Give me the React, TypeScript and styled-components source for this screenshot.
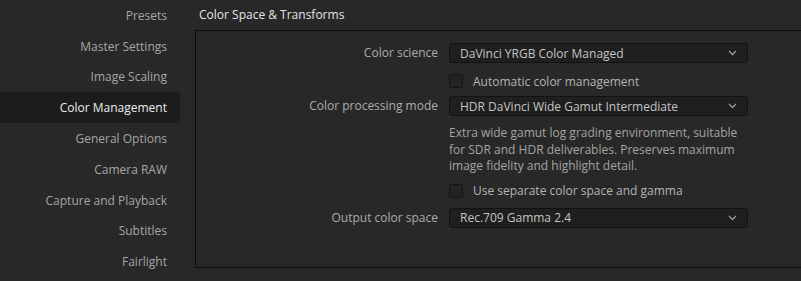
import React from 'react';
import styled, { createGlobalStyle } from 'styled-components';

const GlobalStyle = createGlobalStyle`
    html, body {
        margin: 0;
        padding: 0;
        background: #282828;
        overflow: hidden;
    }
    body {
        font-family: 'Open Sans', 'Liberation Sans', sans-serif;
        -webkit-font-smoothing: antialiased;
    }
`;

const menuItems = [
    'Presets',
    'Master Settings',
    'Image Scaling',
    'Color Management',
    'General Options',
    'Camera RAW',
    'Capture and Playback',
    'Subtitles',
    'Fairlight',
];

const Chevron = () => (
    <svg width="9" height="6" viewBox="0 0 9 6">
        <path d="M1 1 L4.5 4.5 L8 1" fill="none" stroke="#9a9a9a" strokeWidth="1.3" />
    </svg>
);

const Dropdown = ({ value }: { value: string }) => (
    <Select>
        <span>{value}</span>
        <Chevron />
    </Select>
);

const CheckRow = ({ label, top }: { label: string; top: number }) => (
    <>
        <span />
        <Check $top={top}>
            <Box />
            <span>{label}</span>
        </Check>
    </>
);

const App = () => {
    return (
        <Page>
            <GlobalStyle />
            <Sidebar>
                {menuItems.map((item) => (
                    <MenuItem key={item} $active={item === 'Color Management'}>
                        {item}
                    </MenuItem>
                ))}
            </Sidebar>
            <Main>
                <Title>Color Space &amp; Transforms</Title>
                <Panel>
                    <Form>
                        <Label $top={12}>Color science</Label>
                        <Cell $top={12}>
                            <Dropdown value="DaVinci YRGB Color Managed" />
                        </Cell>

                        <CheckRow label="Automatic color management" top={11} />

                        <Label $top={8}>Color processing mode</Label>
                        <Cell $top={8}>
                            <Dropdown value="HDR DaVinci Wide Gamut Intermediate" />
                        </Cell>

                        <span />
                        <Description>
                            Extra wide gamut log grading environment, suitable for SDR and HDR deliverables.
                            Preserves maximum image fidelity and highlight detail.
                        </Description>

                        <CheckRow label="Use separate color space and gamma" top={9} />

                        <Label $top={10}>Output color space</Label>
                        <Cell $top={10}>
                            <Dropdown value="Rec.709 Gamma 2.4" />
                        </Cell>
                    </Form>
                </Panel>
            </Main>
        </Page>
    );
};

const Page = styled.div`
    display: flex;
    width: 801px;
    height: 281px;
    background: #282828;
`;

const Sidebar = styled.div`
    width: 180px;
    flex-shrink: 0;
    display: flex;
    flex-direction: column;
`;

const MenuItem = styled.div<{ $active?: boolean }>`
    height: 30.8px;
    display: flex;
    align-items: center;
    justify-content: flex-end;
    padding-right: 13px;
    font-size: 12px;
    color: ${(p) => (p.$active ? '#ececec' : '#a6a6a6')};
    background: ${(p) => (p.$active ? '#1c1c1c' : 'transparent')};
`;

const Main = styled.div`
    flex: 1;
    padding-left: 15px;
    display: flex;
    flex-direction: column;
`;

const Title = styled.div`
    height: 30px;
    display: flex;
    align-items: center;
    padding-left: 4px;
    font-size: 12px;
    font-weight: 500;
    color: #e4e4e4;
    box-sizing: border-box;
    padding-bottom: 1px;
`;

const Panel = styled.div`
    width: 640px;
    height: 238px;
    box-sizing: border-box;
    border: 1px solid #0c0c0c;
    border-right: none;
    border-top-left-radius: 2px;
    border-bottom-left-radius: 2px;
    background: #282828;
`;

const Form = styled.div`
    display: grid;
    grid-template-columns: 242px 299px;
    column-gap: 11px;
    align-items: center;
`;

const Label = styled.div<{ $top: number }>`
    margin-top: ${(p) => p.$top}px;
    text-align: right;
    font-size: 12px;
    color: #ababab;
    line-height: 20px;
`;

const Cell = styled.div<{ $top: number }>`
    margin-top: ${(p) => p.$top}px;
`;

const Select = styled.div`
    height: 20px;
    box-sizing: border-box;
    border: 1px solid #121212;
    border-radius: 3px;
    background: #1f1f1f;
    display: flex;
    align-items: center;
    justify-content: space-between;
    padding: 0 10px 0 10px;
    font-size: 12px;
    color: #c4c4c4;
`;

const Check = styled.div<{ $top: number }>`
    margin-top: ${(p) => p.$top}px;
    height: 14px;
    display: flex;
    align-items: center;
    gap: 10px;
    font-size: 12px;
    color: #b4b4b4;
`;

const Box = styled.div`
    width: 14px;
    height: 14px;
    box-sizing: border-box;
    border: 1px solid #141414;
    border-radius: 2px;
    background: #232323;
`;

const Description = styled.div`
    margin-top: 9px;
    font-size: 12px;
    line-height: 16.5px;
    color: #a4a4a4;
    padding-right: 6px;
`;

export default App;
